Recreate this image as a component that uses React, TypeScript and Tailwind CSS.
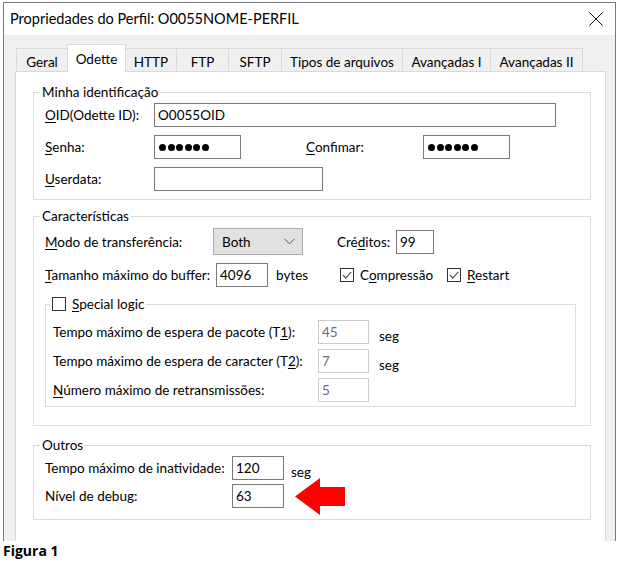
import React from "react";

const U = ({ children }: { children: React.ReactNode }) => (
  <span className="underline decoration-1 underline-offset-[2px]">{children}</span>
);

const Field = ({
  w,
  value,
  disabled,
  dots,
}: {
  w: string;
  value?: string;
  disabled?: boolean;
  dots?: boolean;
}) => (
  <div
    className={`${w} h-[24px] shrink-0 flex items-center pl-[3px] bg-white border ${
      disabled ? "border-[#cccccc] text-[#6d6d6d]" : "border-[#7a7a7a] text-black"
    }`}
  >
    {dots ? (
      <div className="flex gap-[1.5px] pl-[1px]">
        {[0, 1, 2, 3, 4, 5].map((i) => (
          <div key={i} className="w-[7px] h-[7px] rounded-full bg-black" />
        ))}
      </div>
    ) : (
      value
    )}
  </div>
);

const Check = ({ checked }: { checked?: boolean }) => (
  <div className="w-[14px] h-[14px] shrink-0 border border-[#333333] bg-white flex items-center justify-center">
    {checked && (
      <svg width="10" height="10" viewBox="0 0 10 10">
        <path d="M1 5.2 L3.8 8 L9.2 2" fill="none" stroke="#333333" strokeWidth="1.1" />
      </svg>
    )}
  </div>
);

const tabs = [
  { label: "Geral", w: "w-[52px]" },
  { label: "Odette", w: "w-[59px]", active: true },
  { label: "HTTP", w: "w-[52px]" },
  { label: "FTP", w: "w-[53px]" },
  { label: "SFTP", w: "w-[54px]" },
  { label: "Tipos de arquivos", w: "w-[122px]" },
  { label: "Avançadas I", w: "w-[89px]" },
  { label: "Avançadas II", w: "w-[93px]" },
];

export default function App() {
  return (
    <div className="w-[619px] h-[570px] bg-white pt-[2px] pl-[3px] font-['Lato',sans-serif] text-[13.5px] leading-[16px] text-black whitespace-nowrap">
      {/* window */}
      <div className="w-[613px] h-[539px] border-t border-l border-r border-[#7a7a7a] flex flex-col overflow-hidden">
        <div className="h-[32px] shrink-0 bg-white flex items-center justify-between pl-[6px] pr-[12px]">
          <span className="text-[14.5px] leading-[20px]">Propriedades do Perfil: O0055NOME-PERFIL</span>
          <svg width="14" height="14" viewBox="0 0 14 14">
            <path d="M0.5 0.5 L13.5 13.5 M13.5 0.5 L0.5 13.5" stroke="#111111" strokeWidth="1" fill="none" />
          </svg>
        </div>

        <div className="flex-1 bg-[#f0f0f0] pt-[9px] pl-[11px] pr-[9px]">
          {/* tabs */}
          <div className="flex items-end h-[27px] pl-[1px]">
            {tabs.map((t, i) => (
              <div
                key={t.label}
                className={`${t.w} ${i > 0 ? "-ml-px" : ""} flex justify-center border-l border-t border-r border-[#d9d9d9] ${
                  t.active
                    ? "h-[28px] -mb-px relative z-10 bg-white pt-[6px]"
                    : "h-[23px] bg-[#f0f0f0] pt-[5px]"
                }`}
              >
                {t.label}
              </div>
            ))}
          </div>

          {/* panel */}
          <div className="w-[591px] h-[500px] bg-white border border-[#d9d9d9] pt-[12px] pl-[17px]">
            {/* Minha identificação */}
            <fieldset className="w-[558px] border border-[#dcdcdc] p-0 m-0">
              <legend className="ml-[6px] px-[2px] leading-[16px]">Minha identificação</legend>
              <div className="pl-[11px] pt-[3px] pb-[8px] flex flex-col gap-[8px]">
                <div className="flex items-center h-[24px]">
                  <span className="w-[109px] shrink-0">
                    <U>O</U>ID(Odette ID):
                  </span>
                  <Field w="w-[402px]" value="O0055OID" />
                </div>
                <div className="flex items-center h-[24px]">
                  <span className="w-[109px] shrink-0">
                    <U>S</U>enha:
                  </span>
                  <Field w="w-[87px]" dots />
                  <span className="ml-[65px] w-[117px] shrink-0">
                    <U>C</U>onfimar:
                  </span>
                  <Field w="w-[87px]" dots />
                </div>
                <div className="flex items-center h-[24px]">
                  <span className="w-[109px] shrink-0">
                    <U>U</U>serdata:
                  </span>
                  <Field w="w-[169px]" value="" />
                </div>
              </div>
            </fieldset>

            {/* Características */}
            <fieldset className="w-[558px] mt-[8px] border border-[#dcdcdc] p-0">
              <legend className="ml-[6px] px-[2px] leading-[16px]">Características</legend>
              <div className="pl-[11px] pt-[4px] pb-[18px]">
                <div className="flex items-center h-[27px]">
                  <span className="w-[168px] shrink-0">
                    <U>M</U>odo de transferência:
                  </span>
                  <div className="w-[90px] h-[27px] shrink-0 bg-[#e1e1e1] border border-[#adadad] flex items-center justify-between pl-[8px] pr-[7px]">
                    <span>Both</span>
                    <svg width="11" height="7" viewBox="0 0 11 7">
                      <path d="M0.5 0.8 L5.5 5.8 L10.5 0.8" fill="none" stroke="#555555" strokeWidth="1" />
                    </svg>
                  </div>
                  <span className="ml-[34px] w-[59px] shrink-0">
                    Cré<U>d</U>itos:
                  </span>
                  <Field w="w-[38px]" value="99" />
                </div>

                <div className="flex items-center h-[24px] mt-[8px]">
                  <span className="w-[171px] shrink-0">
                    <U>T</U>amanho máximo do buffer:
                  </span>
                  <Field w="w-[52px]" value="4096" />
                  <span className="ml-[8px] w-[64px] shrink-0">bytes</span>
                  <Check checked />
                  <span className="ml-[6px] w-[87px] shrink-0">
                    C<U>o</U>mpressão
                  </span>
                  <Check checked />
                  <span className="ml-[6px]">
                    <U>R</U>estart
                  </span>
                </div>

                {/* Special logic */}
                <fieldset className="w-[531px] mt-[9px] border border-[#dcdcdc] p-0">
                  <legend className="ml-[4px] px-[2px] leading-[16px]">
                    <span className="flex items-center h-[16px]">
                      <Check />
                      <span className="ml-[6px]">
                        <U>S</U>pecial logic
                      </span>
                    </span>
                  </legend>
                  <div className="pl-[7px] pt-[8px] pb-[4px] flex flex-col gap-[5px]">
                    <div className="flex items-center h-[24px]">
                      <span className="w-[265px] shrink-0">
                        Tempo máximo de espera de pacote (T<U>1</U>):
                      </span>
                      <Field w="w-[51px]" value="45" disabled />
                      <span className="ml-[10px] mt-[7px]">seg</span>
                    </div>
                    <div className="flex items-center h-[24px]">
                      <span className="w-[265px] shrink-0">
                        Tempo máximo de espera de caracter (T<U>2</U>):
                      </span>
                      <Field w="w-[51px]" value="7" disabled />
                      <span className="ml-[10px] mt-[7px]">seg</span>
                    </div>
                    <div className="flex items-center h-[24px]">
                      <span className="w-[265px] shrink-0">
                        <U>N</U>úmero máximo de retransmissões:
                      </span>
                      <Field w="w-[51px]" value="5" disabled />
                    </div>
                  </div>
                </fieldset>
              </div>
            </fieldset>

            {/* Outros */}
            <fieldset className="w-[558px] mt-[11px] border border-[#dcdcdc] p-0">
              <legend className="ml-[6px] px-[2px] leading-[16px]">Outros</legend>
              <div className="pl-[11px] pt-[3px] pb-[11px] flex flex-col gap-[4px]">
                <div className="flex items-center h-[24px]">
                  <span className="w-[187px] shrink-0">Tempo máximo de inatividade:</span>
                  <Field w="w-[52px]" value="120" />
                  <span className="ml-[7px] mt-[7px]">seg</span>
                </div>
                <div className="flex items-center h-[24px]">
                  <span className="w-[187px] shrink-0">Nível de debug:</span>
                  <Field w="w-[52px]" value="63" />
                  <svg className="ml-[11px] -my-[7px] shrink-0" width="50" height="37" viewBox="0 0 50 37">
                    <polygon points="0,18.5 25,0 25,9 50,9 50,28 25,28 25,37" fill="#ff0000" />
                  </svg>
                </div>
              </div>
            </fieldset>
          </div>
        </div>
      </div>

      <div className="mt-[1px] font-['Open_Sans',sans-serif] font-bold text-[14px] leading-[18px]">Figura 1</div>
    </div>
  );
}
